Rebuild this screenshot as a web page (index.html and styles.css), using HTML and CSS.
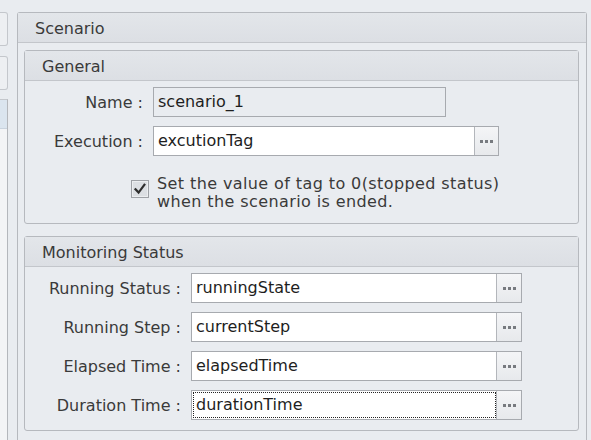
FILE: index.html
```html
<!DOCTYPE html>
<html>
<head>
<meta charset="utf-8">
<link rel="stylesheet" href="styles.css">
</head>
<body>
<div class="app">
  <div class="side">
    <div class="side-btn"></div>
    <div class="side-btn second"></div>
    <div class="side-list">
      <div class="side-sel"></div>
      <div class="side-rest"></div>
    </div>
  </div>
  <div class="panel">
    <div class="panel-head">Scenario</div>
    <div class="panel-body">
      <div class="group general">
        <div class="group-head">General</div>
        <div class="group-body">
          <div class="row">
            <span class="lbl">Name :</span>
            <div class="field name"><span class="val">scenario_1</span></div>
          </div>
          <div class="row">
            <span class="lbl">Execution :</span>
            <div class="field exec"><span class="val">excutionTag</span><span class="btn"><i></i><i></i><i></i></span></div>
          </div>
          <div class="check-row">
            <span class="chk">
              <svg width="18" height="18" viewBox="0 0 18 18"><rect x="0.5" y="0.5" width="17" height="17" fill="#dcdfe3" stroke="#9ea1a6"/><rect x="1.5" y="1.5" width="15" height="15" fill="none" stroke="#eceef0"/><path d="M4.5 9.2 L7.6 12.6 L13.4 4.8" fill="none" stroke="#2e2e2e" stroke-width="2.2" stroke-linecap="square"/></svg>
            </span>
            <span class="chk-text">Set the value of tag to 0(stopped status)<br>when the scenario is ended.</span>
          </div>
        </div>
      </div>
      <div class="group monitor">
        <div class="group-head">Monitoring Status</div>
        <div class="group-body">
          <div class="row">
            <span class="lbl">Running Status :</span>
            <div class="field mon"><span class="val">runningState</span><span class="btn"><i></i><i></i><i></i></span></div>
          </div>
          <div class="row">
            <span class="lbl">Running Step :</span>
            <div class="field mon"><span class="val">currentStep</span><span class="btn"><i></i><i></i><i></i></span></div>
          </div>
          <div class="row">
            <span class="lbl">Elapsed Time :</span>
            <div class="field mon"><span class="val">elapsedTime</span><span class="btn"><i></i><i></i><i></i></span></div>
          </div>
          <div class="row">
            <span class="lbl">Duration Time :</span>
            <div class="field mon"><span class="val focus">durationTime</span><span class="btn"><i></i><i></i><i></i></span></div>
          </div>
        </div>
      </div>
    </div>
  </div>
</div>
</body>
</html>
```
FILE: styles.css
```css
* { box-sizing: border-box; }
html, body { margin: 0; padding: 0; }
body {
  width: 591px;
  height: 440px;
  overflow: hidden;
  background: #e9ecf0;
  font-family: "DejaVu Sans", "Liberation Sans", sans-serif;
  font-size: 16px;
  color: #3a3a3a;
}
.app {
  display: flex;
  align-items: stretch;
  padding-top: 12px;
  height: 440px;
}
.side {
  width: 8px;
  display: flex;
  flex-direction: column;
}
.side-btn {
  height: 34px;
  border: 1px solid #c4c7cc;
  border-left: none;
  border-radius: 0 3px 3px 0;
  background: #edeff2;
}
.side-btn.second { margin-top: 10px; }
.side-list {
  margin-top: 9px;
  flex: 1;
  display: flex;
  flex-direction: column;
  border-top: 1px solid #c4c7cc;
  border-right: 1px solid #b4b7bc;
}
.side-sel {
  height: 29px;
  background: #dbe5ef;
  border-bottom: 1px solid #c9d3de;
}
.side-rest {
  flex: 1;
  background: #f3f4f6;
}
.panel {
  margin-left: 9px;
  width: 570px;
  border: 1px solid #b6b9be;
  border-bottom: none;
  border-radius: 3px 3px 0 0;
  background: #e9ecf0;
  display: flex;
  flex-direction: column;
}
.panel-head, .group-head {
  height: 30px;
  padding: 3px 0 0 17px;
  line-height: 26px;
  border-bottom: 1px solid #c3c6cb;
  background: linear-gradient(#e3e6ea, #dcdfe4);
  color: #3a3a3a;
}
.panel-body {
  padding: 7px 7px 0 6px;
}
.group {
  border: 1px solid #b6b9be;
  border-radius: 3px;
  background: #e9ecf0;
}
.group + .group { margin-top: 12px; }
.general .group-body { padding: 6px 0 12px; }
.monitor .group-body { padding: 6px 0 1px; }
.row {
  display: flex;
  align-items: center;
  height: 30px;
  margin-bottom: 9px;
}
.lbl {
  flex: none;
  text-align: right;
  padding-right: 10px;
  white-space: nowrap;
}
.general .lbl { width: 128px; }
.monitor .lbl { width: 166px; }
.field {
  display: flex;
  height: 30px;
  border: 1px solid #a7aaaf;
  background: #fff;
  color: #1e1e1e;
}
.field.name { width: 293px; background: #e9ecf0; }
.field.exec { width: 346px; }
.field.mon { width: 331px; }
.val {
  flex: 1;
  padding-left: 4px;
  line-height: 27px;
  white-space: nowrap;
}
.val.focus {
  margin: 1px 0 1px 1px;
  padding-left: 2px;
  line-height: 24px;
  border: 1px dotted #222;
}
.btn {
  flex: none;
  width: 24px;
  border-left: 1px solid #b3b6bb;
  background: linear-gradient(#f4f5f7, #e7e9ec);
  display: flex;
  align-items: center;
  justify-content: center;
  gap: 2px;
}
.mon .btn { width: 25px; }
.btn i {
  display: block;
  width: 3px;
  height: 3px;
  background: #777a7f;
}
.check-row {
  display: flex;
  align-items: flex-start;
  padding-left: 106px;
  margin-top: 19px;
}
.chk {
  flex: none;
  width: 18px;
  height: 18px;
  margin-top: 5px;
  margin-right: 8px;
}
.chk svg { display: block; }
.chk-text {
  line-height: 18px;
  letter-spacing: 0.4px;
  color: #3a3a3a;
}
```
